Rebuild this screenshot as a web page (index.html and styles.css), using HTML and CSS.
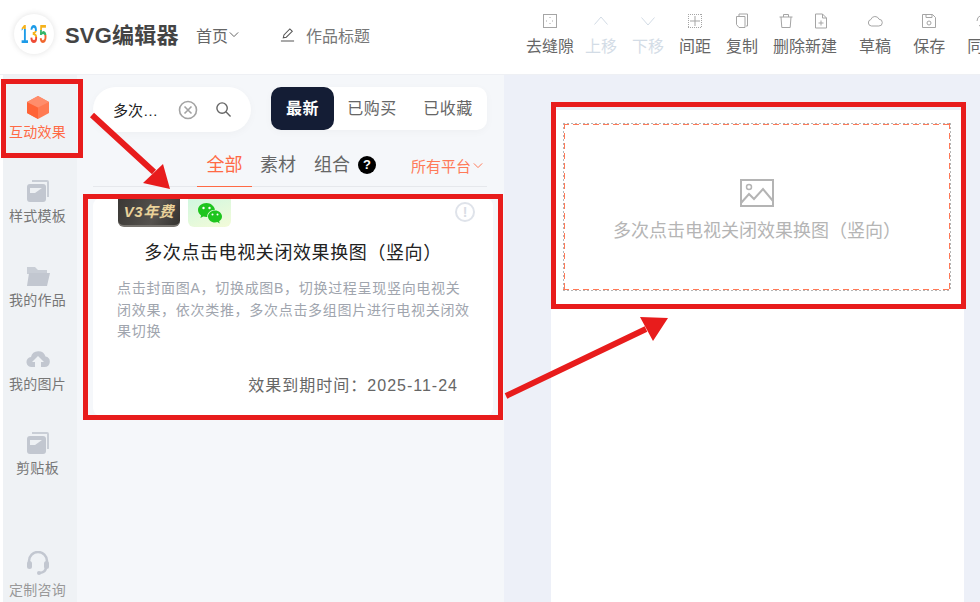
FILE: index.html
```html
<!DOCTYPE html>
<html lang="zh-CN">
<head>
  <meta charset="UTF-8">
  <meta name="viewport" content="width=device-width, initial-scale=1.0">
  <title>SVG编辑器</title>
  <link rel="stylesheet" href="styles.css">
</head>
<body>
  <header class="topbar">
    <div class="logo"><div class="logo-mark"><span class="d1">1</span><span class="d3">3</span><span class="d5">5</span></div></div>
    <div class="brand">SVG编辑器</div>
    <div class="home">首页<svg class="chev" viewBox="0 0 12 8"><path d="M1 1.500l5 5 5-5"/></svg></div>
    <div class="doc-title">
      <svg class="pencil" viewBox="0 0 16 16"><path d="M1 15h14M3.500 11.500l.7-3L10.500 2l2.600 2.600-6.400 6.300z"/></svg>
      <span>作品标题</span>
    </div>
    <nav class="tools">
      <div class="tool first"><svg viewBox="0 0 16 16"><rect x="1.500" y="1.500" width="13" height="13"/><path class="dots" d="M8 4v2M8 10v2M4 8h2M10 8h2"/></svg>去缝隙</div>
      <div class="tool off"><svg viewBox="0 0 16 16"><path d="M1.500 11.500L8 4l6.500 7.500"/></svg>上移</div>
      <div class="tool off"><svg viewBox="0 0 16 16"><path d="M1.500 4.500L8 12l6.500-7.500"/></svg>下移</div>
      <div class="tool"><svg viewBox="0 0 16 16"><path d="M8 3v10M3 8h10"/><path class="dots" d="M1 1.500h14M1 14.500h14M1.500 1v14M14.500 1v14"/></svg>间距</div>
      <div class="tool"><svg viewBox="0 0 16 16"><path d="M5 3V1h8.500v12H12M2.500 3.500H11v11H5l-2.500-3z"/></svg>复制</div>
      <div class="tool-pair">
        <div class="tool"><svg class="nudge" viewBox="0 0 16 16"><path d="M1.500 4h13M5.500 4V1.500h5V4M3 4l.8 10.500h8.400L13 4"/></svg>删除</div>
        <div class="tool"><svg viewBox="0 0 16 16"><path d="M2.500 1h7l4 4v10h-11zM9.500 1v4h4M8 7.500v5M5.500 10h5"/></svg>新建</div>
      </div>
      <div class="tool wide"><svg viewBox="0 0 16 16"><path d="M4.500 13a3.300 3.300 0 0 1-.6-6.500A4.300 4.300 0 0 1 12 6.200 3.400 3.400 0 0 1 11.800 13z"/></svg>草稿</div>
      <div class="tool wide"><svg viewBox="0 0 16 16"><path d="M1.500 1.500h10l3 3v10h-13zM5 1.500v3h6v-3"/><circle cx="8" cy="10" r="2"/></svg>保存</div>
      <div class="tool wide"><svg viewBox="0 0 16 16"><path d="M2 8a6 6 0 0 1 10-4.400M14 8a6 6 0 0 1-10 4.400"/></svg>同步</div>
    </nav>
  </header>

  <div class="workspace">
    <aside class="sidebar">
      <div class="side-item active">
        <svg viewBox="0 0 24 24"><path fill="#ff7a52" d="M12 1l11 6v11l-11 6-11-6V7z"/><path fill="#ff6336" d="M12 12.500V24L1 18V7z"/><path fill="#ff8d6b" d="M12 1l11 6-11 5.500L1 7z"/></svg>
        <span>互动效果</span>
      </div>
      <div class="side-item">
        <svg viewBox="0 0 24 24"><path fill="#c9ced6" d="M6 1h15a2 2 0 0 1 2 2v15h-2V3H6z"/><rect x="1" y="5" width="19" height="18" rx="3" fill="#c2c7d0"/><path fill="#eef1f4" d="M4 9h12l-7 5H4z"/></svg>
        <span>样式模板</span>
      </div>
      <div class="side-item">
        <svg viewBox="0 0 24 24"><path fill="#c9ced6" d="M1 4h8l3 3h9v4H1z"/><path fill="#c2c7d0" d="M3 10h21l-3 13H1z"/></svg>
        <span>我的作品</span>
      </div>
      <div class="side-item">
        <svg viewBox="0 0 24 24"><path fill="#c2c7d0" d="M6 20a5 5 0 0 1-1-10 7.500 7.500 0 0 1 14.500-.5A5.300 5.300 0 0 1 18.500 20H15v-5h3l-6-6-6 6h3v5z"/></svg>
        <span>我的图片</span>
      </div>
      <div class="side-item">
        <svg viewBox="0 0 24 24"><path fill="#c9ced6" d="M6 1h15a2 2 0 0 1 2 2v15h-2V3H6z"/><rect x="1" y="5" width="19" height="18" rx="3" fill="#c2c7d0"/><path fill="#eef1f4" d="M4 9h12l-7 5H4z"/></svg>
        <span>剪贴板</span>
      </div>
      <div class="side-item consult">
        <svg viewBox="0 0 24 24"><path fill="none" stroke="#c2c7d0" stroke-width="2.500" d="M3 13V10a9 9 0 0 1 18 0v3M20 16c0 4-3 5.500-6 6"/><rect x="1" y="10" width="5" height="8" rx="2.500" fill="#c2c7d0"/><rect x="18" y="10" width="5" height="8" rx="2.500" fill="#c2c7d0"/><circle cx="13" cy="22" r="2" fill="#c2c7d0"/></svg>
        <span>定制咨询</span>
      </div>
    </aside>

    <section class="panel">
      <div class="panel-top">
        <div class="search">
          <span class="search-text">多次…</span>
          <svg class="clear" viewBox="0 0 20 20"><circle cx="10" cy="10" r="8.500"/><path d="M6.500 6.500l7 7M13.500 6.500l-7 7"/></svg>
          <svg class="glass" viewBox="0 0 18 18"><circle cx="7.500" cy="7.500" r="5.500"/><path d="M11.500 11.500l5 5"/></svg>
        </div>
        <div class="sort">
          <div class="sort-btn current">最新</div>
          <div class="sort-btn">已购买</div>
          <div class="sort-btn">已收藏</div>
        </div>
      </div>

      <div class="filters">
        <div class="filter current">全部</div>
        <div class="filter">素材</div>
        <div class="filter">组合</div>
        <div class="help">?</div>
        <div class="platform">所有平台<svg class="chev" viewBox="0 0 12 8"><path d="M1 1.500l5 5 5-5"/></svg></div>
      </div>

      <article class="card">
        <div class="card-badges">
          <div class="badge-v3">V3年费</div>
          <div class="badge-wx">
            <svg viewBox="0 0 26 22"><path fill="#1ec51e" d="M9.500 1C4.800 1 1 4.100 1 8c0 2.200 1.200 4.100 3.100 5.400L3.400 16l2.900-1.500c1 .3 2.100.5 3.200.5l.8 0C9.900 11 13.500 7.700 18 7.700 17.200 3.900 13.700 1 9.500 1z"/><path fill="#1ec51e" d="M25 14.500c0-3.300-3.200-6-7-6s-7 2.700-7 6 3.200 6 7 6c.8 0 1.600-.1 2.400-.4l2.300 1.300-.6-2.200c1.800-1.100 2.900-2.800 2.900-4.700z"/><circle cx="6.500" cy="6" r="1.200" fill="#fff"/><circle cx="12.500" cy="6" r="1.200" fill="#fff"/><circle cx="15.500" cy="12.500" r="1" fill="#fff"/><circle cx="20.500" cy="12.500" r="1" fill="#fff"/></svg>
          </div>
        </div>
        <div class="info">!</div>
        <h2 class="card-title">多次点击电视关闭效果换图（竖向）</h2>
        <p class="card-desc">点击封面图A，切换成图B，切换过程呈现竖向电视关闭效果，依次类推，多次点击多组图片进行电视关闭效果切换</p>
        <div class="card-date">效果到期时间：2025-11-24</div>
      </article>
    </section>

    <main class="canvas">
      <div class="page">
        <div class="placeholder">
          <svg viewBox="0 0 34 28"><path fill="none" stroke="#b4b4b4" stroke-width="2" d="M1 1h32v26H1zM1 24l8-9 5 5 9-10 10 12"/><circle cx="9" cy="8" r="2.500" fill="none" stroke="#b4b4b4" stroke-width="1.500"/></svg>
          <div class="placeholder-text">多次点击电视关闭效果换图（竖向）</div>
        </div>
      </div>
    </main>
  </div>

  <svg class="marks" viewBox="0 0 980 602">
    <g fill="none" stroke="#e81c1c">
      <rect x="3.500" y="81.500" width="77" height="74" stroke-width="5"/>
      <rect x="85.500" y="196.500" width="415" height="221" stroke-width="5"/>
      <rect x="553.500" y="104.500" width="410" height="202" stroke-width="5"/>
      <path d="M92 115l62 57M506 396l140-67" stroke-width="6"/>
    </g>
    <path fill="#e81c1c" d="M170 189l-27-6 20-19zM668 318l-15 23-13-24z"/>
  </svg>
</body>
</html>
```

FILE: styles.css
```css
* {
  box-sizing: border-box;
}
body {
  margin: 0;
  height: 602px;
  overflow: hidden;
  font-family: "Liberation Sans", "Noto Sans CJK SC", sans-serif;
  color: #333;
  background: #fff;
}
svg {
  display: block;
}
.chev {
  width: 10px;
  height: 7px;
  fill: none;
  stroke: currentColor;
  stroke-width: 1.2;
}

/* top bar */
.topbar {
  display: flex;
  align-items: center;
  height: 75px;
  padding-left: 14px;
  overflow: hidden;
  white-space: nowrap;
  background: #fff;
  border-bottom: 1px solid #eef0f4;
}
.logo {
  display: flex;
  justify-content: center;
  align-items: center;
  flex: none;
  width: 40px;
  height: 40px;
  margin-top: -7px;
  border-radius: 50%;
  box-shadow: 0 0 6px rgba(0, 0, 0, 0.12);
}
.logo-mark {
  display: flex;
  gap: 3px;
  font-size: 25px;
  font-weight: 700;
  line-height: 26px;
  transform: scaleX(0.55);
}
.logo-mark span {
  color: transparent;
  -webkit-background-clip: text;
  background-clip: text;
}
.d1 { background-image: linear-gradient(#f5b21c 30%, #1d9be8 30%); }
.d3 { background-image: linear-gradient(#1d9be8 40%, #f5b21c 40%, #f5b21c 60%, #ee4b36 60%); }
.d5 { background-image: linear-gradient(#f5b21c 35%, #35b56a 35%, #35b56a 55%, #f0662c 55%); }
.brand {
  flex: none;
  width: 131px;
  margin: -9px 0 0 11px;
  font-size: 22px;
  font-weight: 700;
  letter-spacing: 0.2px;
  color: #444;
}
.home {
  display: flex;
  align-items: center;
  gap: 1px;
  flex: none;
  width: 84px;
  margin-top: -5px;
  font-size: 16px;
  color: #666;
}
.doc-title {
  display: flex;
  align-items: center;
  gap: 11px;
  flex: none;
  width: 246px;
  margin-top: -5px;
  font-size: 16px;
  color: #777;
}
.pencil {
  width: 15px;
  height: 15px;
  fill: none;
  stroke: #555;
  stroke-width: 1.1;
}
.tools {
  display: flex;
  gap: 15px;
}
.tool {
  display: flex;
  flex-direction: column;
  align-items: center;
  gap: 7px;
  margin-top: -3px;
  font-size: 16px;
  line-height: 22px;
  color: #666;
}
.tool svg {
  width: 16px;
  height: 16px;
  fill: none;
  stroke: #a5a5a5;
  stroke-width: 1;
}
.tool .dots {
  stroke-dasharray: 1 1;
}
.tool .nudge {
  margin-right: 6px;
}
.tool.first {
  margin-right: -4px;
}
.tool.off {
  color: #d3dce6;
}
.tool.off svg {
  stroke: #d3dce6;
}
.tool.wide {
  margin-left: 7px;
}
.tool-pair {
  display: flex;
}

/* main area */
.workspace {
  display: flex;
  height: 527px;
}
.sidebar {
  display: flex;
  flex-direction: column;
  flex: none;
  width: 74px;
  margin-left: 3px;
  padding: 20px 5px 0 0;
  overflow: hidden;
  background: #eff2f5;
}
.side-item {
  display: flex;
  flex-direction: column;
  align-items: center;
  gap: 3px;
  flex: none;
  height: 84px;
  font-size: 14px;
  line-height: 20px;
  letter-spacing: 0.3px;
  white-space: nowrap;
  color: #777;
}
.side-item svg {
  width: 24px;
  height: 24px;
}
.side-item.active {
  color: #ff6a45;
}
.side-item.consult {
  margin-top: 36px;
  gap: 5px;
  color: #999;
}

.panel {
  flex: none;
  width: 427px;
  padding: 12px 17px 0 16px;
  background: #f5f7fa;
}
.panel-top {
  display: flex;
  gap: 20px;
}
.search {
  display: flex;
  align-items: center;
  width: 158px;
  height: 45px;
  padding-left: 20px;
  background: #fff;
  border-radius: 23px;
  box-shadow: 0 2px 8px rgba(0, 0, 0, 0.03);
}
.search-text {
  width: 65px;
  padding-bottom: 1px;
  font-size: 15px;
  color: #222;
}
.clear {
  width: 20px;
  height: 20px;
  fill: none;
  stroke: #a3a3a3;
  stroke-width: 1.6;
}
.glass {
  width: 17px;
  height: 17px;
  margin-left: 17px;
  fill: none;
  stroke: #666;
  stroke-width: 1.5;
}
.sort {
  display: flex;
  width: 216px;
  height: 43px;
  background: #fff;
  border-radius: 10px;
  box-shadow: 0 2px 8px rgba(0, 0, 0, 0.03);
}
.sort-btn {
  display: flex;
  justify-content: center;
  align-items: center;
  width: 76px;
  padding-bottom: 3px;
  font-size: 16px;
  letter-spacing: 0.5px;
  color: #666;
}
.sort-btn.current {
  width: 63px;
  font-weight: 700;
  color: #fff;
  background: #141d35;
  border-radius: 10px;
}
.filters {
  display: flex;
  align-items: center;
  height: 43px;
  margin-top: 12px;
  padding-left: 113px;
  border-bottom: 1px solid #e6e8ec;
}
.filter {
  height: 43px;
  padding-top: 9px;
  margin-right: 18px;
  font-size: 18px;
  line-height: 24px;
  color: #666;
}
.filter.current {
  width: 55px;
  margin: 0 8px 0 -9px;
  text-align: center;
  color: #ff6a45;
  border-bottom: 1px solid #ff6a45;
}
.help {
  width: 18px;
  height: 18px;
  margin-left: -10px;
  font-size: 13px;
  font-weight: 700;
  line-height: 18px;
  text-align: center;
  color: #fff;
  background: #000;
  border-radius: 50%;
}
.platform {
  display: flex;
  align-items: center;
  gap: 2px;
  margin-left: 35px;
  font-size: 15px;
  color: #ff7a58;
}

.card {
  position: relative;
  height: 218px;
  margin: 11px -6px 0 0;
  padding-left: 25px;
  background: #fff;
  border-radius: 8px;
}
.card-badges {
  display: flex;
  gap: 8px;
}
.badge-v3 {
  width: 62px;
  height: 29px;
  font-size: 15px;
  font-weight: 700;
  font-style: italic;
  line-height: 27px;
  letter-spacing: 0.5px;
  text-align: center;
  color: #e9d29a;
  background: linear-gradient(115deg, #3a3835 0%, #55524e 60%, #34322f 100%);
  border-radius: 0 0 6px 6px;
  border-bottom: 2px solid #77746f;
}
.badge-wx {
  display: flex;
  justify-content: center;
  align-items: center;
  width: 43px;
  height: 29px;
  background: linear-gradient(160deg, #d0f7e0, #f3fbd8);
  border-radius: 0 0 6px 6px;
}
.badge-wx svg {
  width: 26px;
  height: 22px;
}
.info {
  position: absolute;
  top: 4px;
  right: 18px;
  width: 20px;
  height: 20px;
  font-size: 14px;
  font-weight: 700;
  line-height: 16px;
  text-align: center;
  color: #d9dde5;
  border: 2px solid #dfe3ea;
  border-radius: 50%;
}
.card-title {
  margin: 12px 0 0;
  padding-right: 25px;
  font-size: 18px;
  font-weight: 400;
  line-height: 28px;
  letter-spacing: 0.6px;
  text-align: center;
  color: #222;
}
.card-desc {
  width: 356px;
  height: 64px;
  margin: 11px 0 0 -1px;
  font-size: 14px;
  line-height: 21.500px;
  letter-spacing: 0.7px;
  color: #a0a5ae;
}
.card-date {
  margin-top: 34px;
  padding-right: 35px;
  font-size: 16px;
  line-height: 20px;
  letter-spacing: 1px;
  text-align: right;
  color: #666;
}

.canvas {
  flex: 1;
  padding: 35px 16px 0 47px;
  background: #edf0f8;
}
.page {
  height: 100%;
  padding: 13px 13px 0 12px;
  background: #fff;
}
/* grey dotted outer row, orange dashes just inside it */
.placeholder {
  --dash-x: repeating-linear-gradient(90deg, #ff7a58 0 6px, transparent 6px 10px);
  --dash-y: repeating-linear-gradient(180deg, #ff7a58 0 6px, transparent 6px 10px);
  --dot-x: repeating-linear-gradient(90deg, #b5b5b5 0 2px, transparent 2px 4px);
  --dot-y: repeating-linear-gradient(180deg, #b5b5b5 0 2px, transparent 2px 4px);
  display: flex;
  flex-direction: column;
  justify-content: center;
  align-items: center;
  gap: 11px;
  height: 168px;
  padding-top: 8px;
  background-image: var(--dot-x), var(--dot-x), var(--dot-y), var(--dot-y), var(--dash-x), var(--dash-x), var(--dash-y), var(--dash-y);
  background-position: 0 0, 0 100%, 0 0, 100% 0, 0 1px, 0 calc(100% - 1px), 1px 0, calc(100% - 1px) 0;
  background-size: 100% 1px, 100% 1px, 1px 100%, 1px 100%, 100% 1px, 100% 1px, 1px 100%, 1px 100%;
  background-repeat: no-repeat;
}
.placeholder svg {
  width: 34px;
  height: 28px;
}
.placeholder-text {
  font-size: 18px;
  line-height: 26px;
  color: #b5b5b5;
}

/* red annotations drawn over the screenshot */
.marks {
  position: absolute;
  top: 0;
  left: 0;
  width: 980px;
  height: 602px;
  pointer-events: none;
}
```
